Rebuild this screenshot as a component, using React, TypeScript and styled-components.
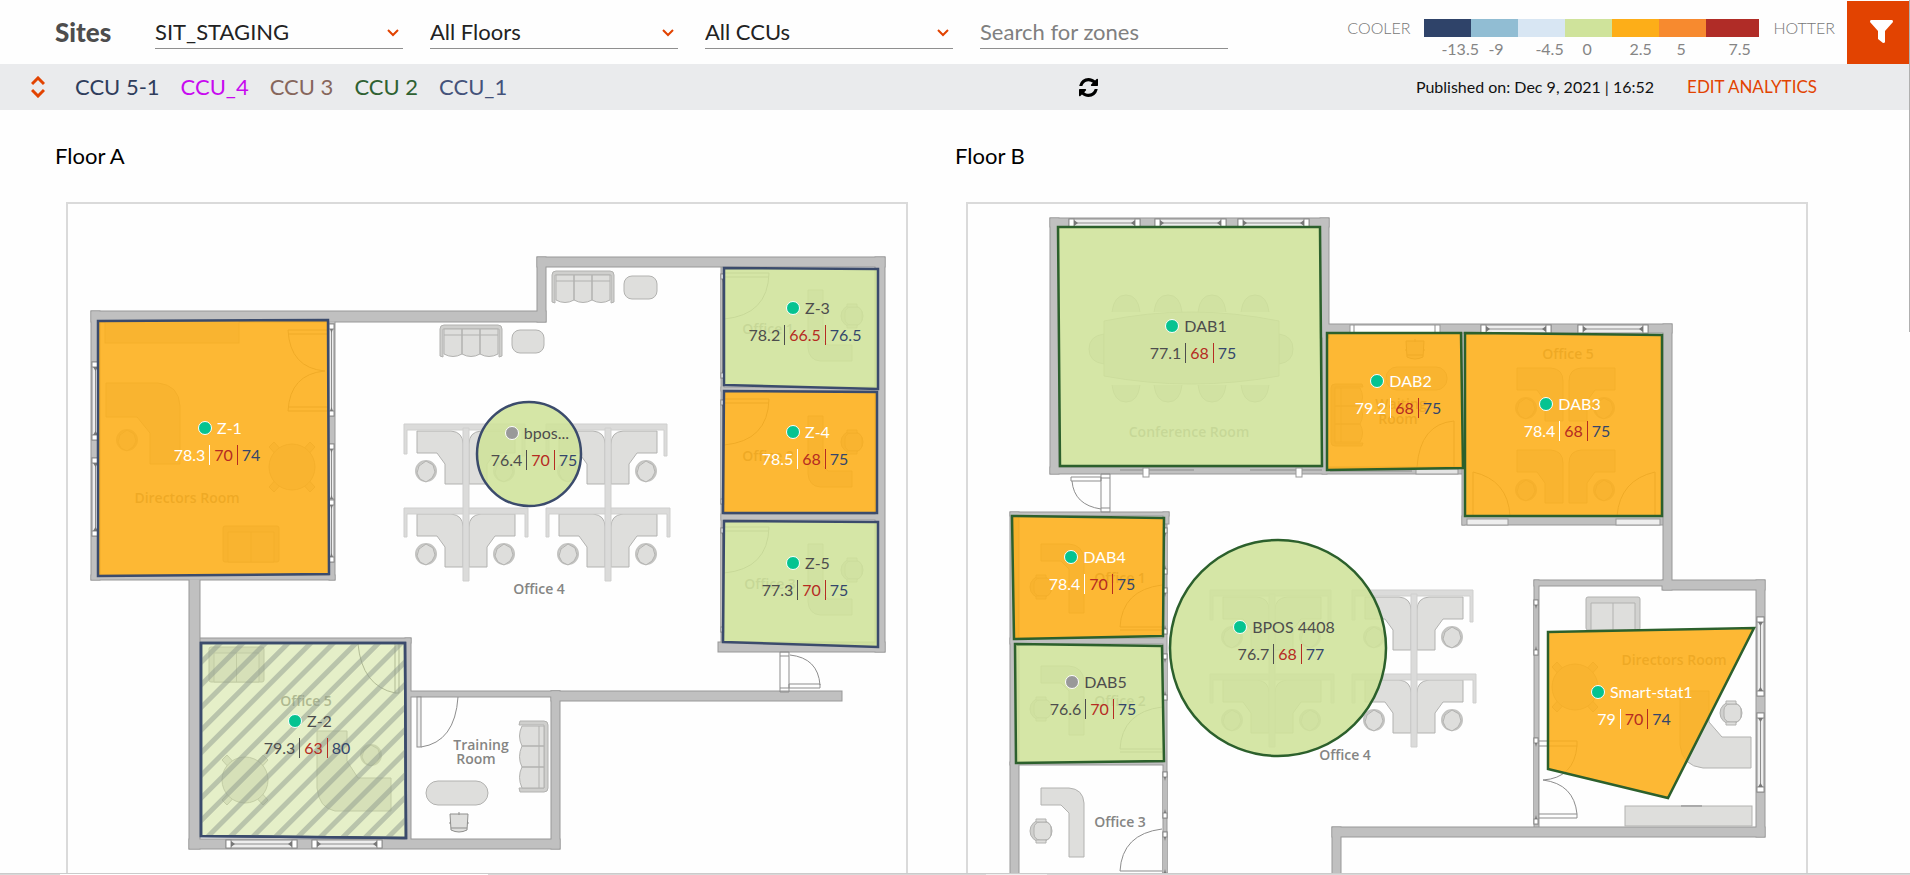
import React from 'react';
import styled, { createGlobalStyle } from 'styled-components';

const GlobalStyle = createGlobalStyle`
  * { box-sizing: border-box; }
  body {
    margin: 0;
    background: #fefefe;
    color: #000;
    font-family: Lato, "Liberation Sans", sans-serif;
    font-size: 16px;
  }
`;

const ORANGE = '#e24301';

/* ---------- page frame ---------- */

const Window = styled.div`
  display: flex;
  flex-direction: column;
  height: 100vh;
  overflow: hidden;
`;

const Upper = styled.div`
  display: flex;
  flex: 1;
  min-height: 0;
`;

const Page = styled.div`
  display: flex;
  flex-direction: column;
  flex: 1;
  min-width: 0;
`;

const ScrollRail = styled.div`
  width: 1px;
`;

const ScrollThumb = styled.div`
  height: 38%;
  background: #b0b0b0;
`;

const BottomEdge = styled.div`
  display: flex;
  height: 2px;
  border-top: 1px solid #cbcbcb;
`;

const EdgePart = styled.div<{ $grow: number; $tone: string }>`
  flex: ${(p) => p.$grow} 0 0;
  background: ${(p) => p.$tone};
`;

/* ---------- header ---------- */

const Header = styled.header`
  display: flex;
  flex-shrink: 0;
  height: 64px;
  padding-left: 55px;
`;

const Title = styled.h1`
  width: 100px;
  margin: 0;
  font-size: 26px;
  line-height: 64px;
  font-weight: 900;
  color: #4d4d4d;
`;

const Filters = styled.div`
  display: flex;
  gap: 27px;
  flex: 0 1 1073px;
  height: 49px;
  padding-top: 15px;
`;

const Field = styled.label`
  display: grid;
  align-items: center;
  flex: 1 1 0;
  min-width: 0;
  border-bottom: 1px solid #8f8f8f;
`;

const SelectBox = styled.select`
  grid-area: 1 / 1;
  width: 100%;
  appearance: none;
  border: 0;
  padding: 0;
  background: transparent;
  font: inherit;
  font-size: 22px;
  line-height: 30px;
  color: #222;
`;

const SearchBox = styled.input`
  grid-area: 1 / 1;
  width: 100%;
  border: 0;
  padding: 0;
  background: transparent;
  font: inherit;
  font-size: 22px;
  line-height: 30px;
  color: #222;
  &::placeholder { color: #808080; opacity: 1; }
`;

const Caret = styled.svg`
  grid-area: 1 / 1;
  justify-self: end;
  margin: 3px 4px 0 0;
  pointer-events: none;
`;

const Legend = styled.div`
  display: flex;
  gap: 14px;
  margin-left: auto;
  padding: 19px 12px 0 0;
`;

const LegendEnd = styled.span`
  font-size: 16px;
  line-height: 18px;
  font-weight: 300;
  color: #777;
`;

const Scale = styled.div`
  display: flex;
`;

const Step = styled.div<{ $color: string }>`
  width: 47px;
  border-top: 18px solid ${(p) => p.$color};
  padding-left: 17px;
  font-size: 16px;
  line-height: 24px;
  white-space: nowrap;
  color: #858585;
  &:last-child { width: 53px; padding-left: 22px; }
`;

const FilterButton = styled.button`
  display: flex;
  justify-content: center;
  width: 62px;
  margin-top: 1px;
  border: 0;
  padding: 19px 0 0 7px;
  background: ${ORANGE};
`;

/* ---------- controller bar ---------- */

const Bar = styled.div`
  display: grid;
  grid-template-columns: 13fr 10fr;
  flex-shrink: 0;
  height: 46px;
  background: #eaebed;
`;

const BarLeft = styled.div`
  display: flex;
  align-items: center;
  gap: 21px;
  padding-left: 31px;
`;

const BarRight = styled.div`
  display: flex;
  align-items: center;
  gap: 33px;
  padding-right: 92px;
`;

const IconButton = styled.button`
  display: flex;
  border: 0;
  padding: 0;
  background: transparent;
  color: inherit;
`;

const SortButton = styled(IconButton)`
  margin-right: 9px;
`;

const RefreshButton = styled(IconButton)`
  margin-right: auto;
`;

const Controller = styled.a<{ $color: string }>`
  font-size: 22px;
  line-height: 46px;
  text-decoration: none;
  color: ${(p) => p.$color};
`;

const Published = styled.span`
  font-size: 16px;
  line-height: 44px;
  color: #111;
`;

const EditLink = styled.a`
  font-size: 17px;
  line-height: 44px;
  text-decoration: none;
  color: ${ORANGE};
`;

/* ---------- floors ---------- */

const Floors = styled.main`
  display: grid;
  grid-template-columns: 1fr 1fr;
  gap: 36px;
  flex: 1;
  min-height: 0;
  padding: 30px 90px 0 55px;
  overflow: hidden;
`;

const FloorTitle = styled.h2`
  margin: 0 0 30px;
  font-size: 22px;
  line-height: 32px;
  font-weight: 400;
`;

const Sheet = styled.div`
  position: relative;
  margin: 0 11px;
  border: 2px solid #dadada;
`;

const Drawing = styled.svg`
  display: block;
  width: 100%;
`;

const RoomText = styled.text`
  font-family: "Open Sans", sans-serif;
  font-size: 14px;
  font-weight: 600;
  fill: #858583;
  text-anchor: middle;
`;

const Pin = styled.div<{ $light: boolean }>`
  position: absolute;
  transform: translate(-50%, -14px);
  font-size: 16px;
  white-space: nowrap;
  color: ${(p) => (p.$light ? '#fff' : '#4d4d4d')};
`;

const PinName = styled.div`
  display: flex;
  align-items: center;
  justify-content: safe center;
  gap: 5px;
  height: 27px;
  padding-left: 6px;
`;

const Dot = styled.span<{ $on: boolean }>`
  flex: none;
  width: 14px;
  height: 14px;
  border: 1px solid #fff;
  border-radius: 50%;
  background: ${(p) => (p.$on ? '#05c391' : '#999')};
`;

const Readings = styled.div`
  display: flex;
  align-items: center;
  justify-content: center;
  height: 27px;
`;

const Reading = styled.span<{ $color?: string }>`
  padding: 0 4px;
  line-height: 20px;
  color: ${(p) => p.$color ?? 'inherit'};
  &:not(:last-child) { border-right: 1px solid; }
`;

/* ---------- drawing parts ---------- */

type Rect = [number, number, number, number];

const Walls = ({ rects }: { rects: Rect[] }) => (
  <>
    <g fill="#989898" stroke="#989898" strokeWidth={1}>
      {rects.map(([x, y, w, h], i) => <rect key={i} x={x} y={y} width={w} height={h} />)}
    </g>
    <g fill="#c0c0c0">
      {rects.map(([x, y, w, h], i) => <rect key={i} x={x + 0.5} y={y + 0.5} width={w - 1} height={h - 1} />)}
    </g>
  </>
);

const PaneH = ({ x, y, w, h = 8 }: { x: number; y: number; w: number; h?: number }) => (
  <g stroke="#8d8d8d" strokeWidth={1}>
    <rect x={x} y={y} width={w} height={h} fill="#ededed" />
    <path d={`M${x} ${y + h / 2}h${w}`} />
    <rect x={x} y={y} width={5} height={h} fill="#fff" />
    <rect x={x + w - 5} y={y} width={5} height={h} fill="#fff" />
    <path d={`M${x + 5} ${y + 1}l4 ${h / 2 - 1}l-4 ${h / 2 - 1}zM${x + w - 5} ${y + 1}l-4 ${h / 2 - 1}l4 ${h / 2 - 1}z`} fill="#777" stroke="none" />
  </g>
);

const PaneV = ({ x, y, h, w = 7 }: { x: number; y: number; h: number; w?: number }) => (
  <g stroke="#8d8d8d" strokeWidth={1}>
    <rect x={x} y={y} width={w} height={h} fill="#ededed" />
    <path d={`M${x + w / 2} ${y}v${h}`} />
    <rect x={x} y={y} width={w} height={5} fill="#fff" />
    <rect x={x} y={y + h - 5} width={w} height={5} fill="#fff" />
    <path d={`M${x + 1} ${y + 5}l${w / 2 - 1} 4l${w / 2 - 1} -4zM${x + 1} ${y + h - 5}l${w / 2 - 1} -4l${w / 2 - 1} 4z`} fill="#777" stroke="none" />
  </g>
);

const FURNITURE = { fill: '#dededc', stroke: '#b2b2b0', strokeWidth: 1 };

const Sofa = ({ x, y, rotate = 0 }: { x: number; y: number; rotate?: number }) => (
  <g transform={`translate(${x} ${y}) rotate(${rotate})`} {...FURNITURE}>
    <path d="M0 31V4Q0 0 4 0H58Q62 0 62 4V31L59 32V4H3V32Z" fill="#cfcfcd" />
    <path d="M4 4H22V29Q13 34 4 29ZM22 4H40V29Q31 34 22 29ZM40 4H58V29Q49 34 40 29Z" />
    <path d="M4 10H58" />
  </g>
);

const LoveSeat = ({ x, y, w = 54, h = 33 }: { x: number; y: number; w?: number; h?: number }) => (
  <g {...FURNITURE}>
    <rect x={x} y={y} width={w} height={h} rx={2} fill="#d2d2d0" />
    <path d={`M${x + 5} ${y + 6}h${w - 10}v${h - 6}h${10 - w}zM${x + w / 2} ${y + 6}v${h - 6}`} />
  </g>
);

const RoundChair = ({ x, y }: { x: number; y: number }) => (
  <g transform={`translate(${x} ${y})`} {...FURNITURE}>
    <circle r={10} strokeWidth={2} stroke="#c4c4c2" />
    <path d="M-7 -5L0 -10L7 -6L9 1L6 7L0 11L-6 8L-9 2Z" />
  </g>
);

const BoxChair = ({ x, y }: { x: number; y: number }) => (
  <g transform={`translate(${x} ${y})`} {...FURNITURE}>
    <circle r={11} fill="#d0d0ce" />
    <rect x={-7} y={-9} width={17} height={18} rx={6} />
    <path d="M-5 -12H5V-9H-5ZM-5 9H5V12H-5Z" />
  </g>
);

const HALF_DESK = 'M-49 7H-15Q-3 8 -3 20V60H-21V40L-29 29H-49Z';

const Desks = ({ x, y }: { x: number; y: number }) => (
  <g transform={`translate(${x} ${y})`} {...FURNITURE}>
    <path d={HALF_DESK} />
    <path d={HALF_DESK} transform="scale(-1 1)" />
    <RoundChair x={-40} y={47} />
    <RoundChair x={38} y={47} />
  </g>
);

const DeskPod = ({ x, y }: { x: number; y: number }) => (
  <g>
    <Desks x={x} y={y} />
    <Desks x={x} y={y + 83} />
    <g transform={`translate(${x} ${y})`} fill="#dbdbda" stroke="#cfcfce" strokeWidth={1}>
      <path d="M-62 0H59V32H56V6H-59V30H-62Z" />
      <path d="M-62 84H62V113H59V90H-59V113H-62Z" />
      <path d="M-3 4H3V157H-3Z" />
    </g>
  </g>
);

const CornerDesk = ({ x, y }: { x: number; y: number }) => (
  <path transform={`translate(${x} ${y})`} d="M0 0H52Q73 2 74 23V81H44V50L31 34H0Z" {...FURNITURE} />
);

const SmallDesk = ({ x, y }: { x: number; y: number }) => (
  <path transform={`translate(${x} ${y})`} d="M0 0H28Q42 1 43 15V69H28V25L20 17H0Z" {...FURNITURE} />
);

const RoundTable = ({ x, y }: { x: number; y: number }) => (
  <g transform={`translate(${x} ${y})`} {...FURNITURE}>
    <path d="M-23 -20L-18 -25L23 20L18 25ZM23 -20L18 -25L-23 20L-18 25Z" />
    <circle r={23} />
  </g>
);

const Stool = ({ x, y }: { x: number; y: number }) => (
  <g transform={`translate(${x} ${y})`} {...FURNITURE} stroke="#8f8f8d">
    <path d="M-9 -9H9L8 7Q0 11 -8 7ZM-8 5H8M0 -11V-8M-10 0H-8M8 0H10" />
  </g>
);

const LINE = { fill: 'none', stroke: '#8d8d8d', strokeWidth: 1 };

const Stripes = () => (
  <pattern id="hatch" width={16} height={16} patternUnits="userSpaceOnUse" patternTransform="rotate(45)">
    <rect width={5} height={16} fill="#8d9a8d" fillOpacity={0.5} />
  </pattern>
);

const FloorADrawing = () => (
  <>
    <Walls
      rects={[
        [91, 311, 455, 11], [537, 257, 9, 65], [537, 257, 348, 10], [875, 257, 10, 395],
        [718, 642, 167, 10], [91, 311, 9, 269], [91, 575, 244, 5], [329, 321, 6, 259],
        [189, 579, 11, 270], [189, 839, 371, 10], [200, 638, 211, 5], [405, 638, 6, 206],
        [405, 691, 155, 6], [551, 691, 9, 158], [551, 691, 291, 10], [721, 267, 3, 376],
        [721, 387, 156, 4], [721, 514, 156, 6],
      ]}
    />
    <PaneV x={92} y={362} h={78} />
    <PaneV x={92} y={458} h={78} />
    <PaneV x={329} y={324} h={92} w={5} />
    <PaneV x={329} y={444} h={60} w={5} />
    <PaneV x={329} y={500} h={62} w={5} />
    <PaneH x={226} y={840} w={71} />
    <PaneH x={312} y={840} w={70} />
    {[274, 400, 528].map((y) => <PaneV key={y} x={721} y={y} h={104} w={3} />)}

    <Sofa x={552} y={271} />
    <rect x={624} y={276} width={33} height={23} rx={8} {...FURNITURE} />
    <Sofa x={440} y={325} />
    <rect x={512} y={330} width={32} height={23} rx={8} {...FURNITURE} />
    <DeskPod x={466} y={424} />
    <DeskPod x={608} y={424} />
    <RoomText x={539} y={594}>Office 4</RoomText>

    <rect x={105} y={321} width={134} height={22} {...FURNITURE} />
    <CornerDesk x={106} y={383} />
    <RoundChair x={127} y={440} />
    <path d="M329 330H288Q290 368 325 371Q290 374 288 411H329M288 334H329M288 407H329" {...LINE} />
    <RoundTable x={292} y={467} />
    <RoomText x={187} y={503}>Directors Room</RoomText>
    <LoveSeat x={223} y={526} w={56} h={36} />

    {[273, 399, 527].map((y) => (
      <g key={y}>
        <path d={`M724 ${y}H769Q768 ${y + 42} 724 ${y + 46}M724 ${y + 4}H769`} {...LINE} />
        <path transform={`translate(808 ${y + 17})`} d="M0 0H15V50L20 55H44V71H12Q1 70 0 58Z" {...FURNITURE} />
        <BoxChair x={852} y={y + 43} />
      </g>
    ))}
    <RoomText x={768} y={334}>Office 1</RoomText>
    <RoomText x={768} y={461}>Office 2</RoomText>
    <RoomText x={770} y={589}>Office 3</RoomText>

    <LoveSeat x={209} y={647} w={55} h={35} />
    <path d="M358 644Q362 686 395 693H399V644M395 644V693" {...LINE} />
    <RoomText x={306} y={706}>Office 5</RoomText>
    <RoundTable x={245} y={780} />
    <path d="M317 731H347V761L358 778H391V811H335Q319 808 317 788Z" {...FURNITURE} />
    <RoundChair x={371} y={755} />

    <rect x={417} y={697} width={4} height={50} {...LINE} fill="#eee" />
    <path d="M458 697Q455 742 421 747" {...LINE} />
    <RoomText x={481} y={750}>Training</RoomText>
    <RoomText x={476} y={764}>Room</RoomText>
    <rect x={426} y={781} width={62} height={24} rx={12} {...FURNITURE} />
    <Stool x={459} y={823} />
    <g transform="translate(548 721) rotate(90)" {...FURNITURE}>
      <path d="M0 28V4Q0 0 4 0H67Q71 0 71 4V28L67 29V4H4V29Z" fill="#cfcfcd" />
      <path d="M5 4H25V26Q15 31 5 26ZM25 4H46V26Q36 31 25 26ZM46 4H67V26Q56 31 46 26ZM5 9H67" />
    </g>

    <path d="M780 652H789V692H780ZM780 656H789M780 688H789M789 684H820V688H789ZM790 655Q818 658 820 685" {...LINE} />
  </>
);

const FloorBDrawing = () => (
  <>
    <Walls
      rects={[
        [1050, 218, 9, 256], [1050, 218, 279, 9], [1320, 218, 9, 120], [1322, 330, 5, 144],
        [1320, 324, 352, 9], [1050, 467, 412, 7], [1663, 324, 9, 266], [1462, 333, 3, 192],
        [1462, 516, 201, 9], [1662, 580, 103, 10], [1534, 580, 130, 6], [1756, 580, 9, 257],
        [1332, 827, 433, 10], [1332, 827, 9, 120], [1534, 580, 5, 247], [1010, 512, 9, 450],
        [1010, 512, 159, 4], [1163, 512, 6, 12], [1163, 524, 4, 438], [1010, 638, 156, 6],
        [1010, 762, 156, 3],
      ]}
    />
    <PaneH x={1069} y={219} w={71} />
    <PaneH x={1155} y={219} w={71} />
    <PaneH x={1238} y={219} w={71} />
    <rect x={1350} y={325} width={90} height={8} fill="#fff" stroke="#999" />
    <path d="M1354 325V333M1435 325V333" {...LINE} />
    <PaneH x={1481} y={325} w={70} />
    <PaneH x={1578} y={325} w={70} />
    <path d="M1120 470H1194M1250 470H1322M1330 471H1412" {...LINE} />
    <rect x={1143} y={468} width={6} height={9} fill="#fff" stroke="#999" />
    <rect x={1296} y={468} width={6} height={9} fill="#fff" stroke="#999" />
    <rect x={1416} y={469} width={42} height={5} fill="#e4e4e4" stroke="#999" />
    <rect x={1467} y={519} width={41} height={6} fill="#eee" stroke="#999" />
    <rect x={1616} y={519} width={44} height={6} fill="#eee" stroke="#999" />
    <PaneV x={1757} y={617} h={79} />
    <PaneV x={1757} y={713} h={79} />
    <PaneV x={1534} y={600} h={55} w={4} />
    <PaneV x={1534} y={738} h={86} w={4} />
    {[528, 654, 772].map((y) => <PaneV key={y} x={1163} y={y} h={46} w={4} />)}
    <PaneV x={1163} y={588} h={46} w={4} />
    <PaneV x={1163} y={832} h={46} w={4} />

    {[1126, 1168, 1212, 1255].map((x) => (
      <g key={x} {...FURNITURE}>
        <path d={`M${x - 14} 312Q${x - 12} 295 ${x} 295Q${x + 12} 295 ${x + 14} 312`} />
        <path d={`M${x - 14} 385Q${x - 12} 402 ${x} 402Q${x + 12} 402 ${x + 14} 385`} />
      </g>
    ))}
    <path d="M1104 334Q1089 336 1089 349Q1089 362 1104 364ZM1279 334Q1293 336 1293 349Q1293 362 1279 364Z" {...FURNITURE} />
    <path d="M1104 321Q1191 303 1279 321V376Q1191 392 1104 376Z" {...FURNITURE} />
    <RoomText x={1189} y={437}>Conference Room</RoomText>

    <Stool x={1415} y={350} />
    <rect x={1386} y={367} width={61} height={23} rx={11} {...FURNITURE} />
    <RoomText x={1401} y={409}>Waiting</RoomText>
    <RoomText x={1398} y={424}>Room</RoomText>
    <Sofa x={1331} y={446} rotate={-90} />
    <path d="M1417 467Q1420 424 1454 421V467" {...LINE} />

    <RoomText x={1568} y={359}>Office 5</RoomText>
    <Desks x={1566} y={361} />
    <Desks x={1566} y={443} />
    <path d="M1473 516V472Q1508 480 1510 516M1655 516V472Q1620 480 1617 516" {...LINE} />

    <path d="M1101 474H1110V512H1101ZM1101 478H1110M1101 508H1110M1071 477H1101V481H1071ZM1072 481Q1074 505 1101 509" {...LINE} />

    {[544, 666, 788].map((y) => (
      <g key={y}>
        <SmallDesk x={1041} y={y} />
        <BoxChair x={1041} y={y + 43} />
        <path d={`M1162 ${y + 41}Q1122 ${y + 46} 1120 ${y + 83}H1162M1120 ${y + 86}H1162`} {...LINE} />
      </g>
    ))}
    <RoomText x={1120} y={583}>Office 1</RoomText>
    <RoomText x={1120} y={706}>Office 2</RoomText>
    <RoomText x={1120} y={827}>Office 3</RoomText>

    <DeskPod x={1272} y={590} />
    <DeskPod x={1414} y={590} />
    <RoomText x={1345} y={760}>Office 4</RoomText>

    <LoveSeat x={1586} y={597} />
    <RoundTable x={1575} y={687} />
    <RoomText x={1674} y={665}>Directors Room</RoomText>
    <path d="M1680 691H1709V722L1722 737H1751V768H1703Q1682 766 1680 745Z" {...FURNITURE} />
    <BoxChair x={1731} y={713} />
    <rect x={1625} y={806} width={127} height={20} {...FURNITURE} />
    <rect x={1681} y={805} width={21} height={2} fill="#aaa" />
    <path d="M1539 741H1577V746H1539M1577 746Q1574 778 1543 780Q1574 784 1577 814M1539 814H1577V818H1539" {...LINE} />
  </>
);

/* ---------- data ---------- */

const FILL = { warm: '#fdae18', mild: '#cfe29a' };

type Zone = {
  name: string;
  values: [string, string, string];
  x: number;
  y: number;
  width?: number;
  tone: 'warm' | 'mild';
  off?: boolean;
  hatched?: boolean;
  points?: string;
  circle?: [number, number, number];
};

type Floor = {
  title: string;
  left: number;
  outline: string;
  drawing: React.ReactNode;
  zones: Zone[];
};

const SHEET_W = 838;
const SHEET_H = 740;
const SHEET_TOP = 204;

const floors: Floor[] = [
  {
    title: 'Floor A',
    left: 68,
    outline: '#3b4b6c',
    drawing: <FloorADrawing />,
    zones: [
      { name: 'Z-1', values: ['78.3', '70', '74'], x: 217, y: 428, tone: 'warm', points: '98,321 328,320 329,574 98,576' },
      { name: 'Z-3', values: ['78.2', '66.5', '76.5'], x: 805, y: 308, tone: 'mild', points: '724,268 878,269 878,389 724,385' },
      { name: 'Z-4', values: ['78.5', '68', '75'], x: 805, y: 432, tone: 'warm', points: '724,391 877,392 877,513 723,513' },
      { name: 'Z-5', values: ['77.3', '70', '75'], x: 805, y: 563, tone: 'mild', points: '724,521 878,522 878,647 723,642' },
      { name: 'bpos...', values: ['76.4', '70', '75'], x: 534, y: 433, tone: 'mild', off: true, circle: [529, 454, 52] },
      { name: 'Z-2', values: ['79.3', '63', '80'], x: 307, y: 721, tone: 'mild', hatched: true, points: '201,643 405,643 406,838 201,836' },
    ],
  },
  {
    title: 'Floor B',
    left: 968,
    outline: '#2c602c',
    drawing: <FloorBDrawing />,
    zones: [
      { name: 'DAB1', values: ['77.1', '68', '75'], x: 1193, y: 326, tone: 'mild', points: '1058,227 1320,227 1322,466 1060,466' },
      { name: 'DAB2', values: ['79.2', '68', '75'], x: 1398, y: 381, tone: 'warm', points: '1327,333 1461,333 1463,468 1327,470' },
      { name: 'DAB3', values: ['78.4', '68', '75'], x: 1567, y: 404, tone: 'warm', points: '1465,333 1662,335 1662,516 1465,516' },
      { name: 'DAB4', values: ['78.4', '70', '75'], x: 1092, y: 557, tone: 'warm', points: '1012,516 1164,518 1163,636 1014,639' },
      { name: 'DAB5', values: ['76.6', '70', '75'], x: 1093, y: 682, tone: 'mild', off: true, points: '1015,644 1162,646 1164,761 1016,763' },
      { name: 'BPOS 4408', values: ['76.7', '68', '77'], x: 1281, y: 627, tone: 'mild', circle: [1278, 648, 108] },
      { name: 'Smart-stat1', values: ['79', '70', '74'], x: 1634, y: 692, width: 98, tone: 'warm', points: '1548,632 1754,628 1668,798 1548,769' },
    ],
  },
];

const ZoneShape = ({ zone, stroke, fill, fillOpacity }: { zone: Zone; stroke: string; fill: string; fillOpacity: number }) =>
  zone.circle ? (
    <circle cx={zone.circle[0]} cy={zone.circle[1]} r={zone.circle[2]} fill={fill} fillOpacity={fillOpacity} stroke={stroke} strokeWidth={2.5} />
  ) : (
    <polygon points={zone.points} fill={fill} fillOpacity={fillOpacity} stroke={stroke} strokeWidth={2.5} />
  );

const FloorSheet = ({ floor }: { floor: Floor }) => (
  <section>
    <FloorTitle>{floor.title}</FloorTitle>
    <Sheet>
      <Drawing viewBox={`${floor.left} ${SHEET_TOP} ${SHEET_W} ${SHEET_H}`}>
        <defs><Stripes /></defs>
        {floor.drawing}
        {floor.zones.map((z) => (
          <g key={z.name}>
            <ZoneShape zone={z} stroke={floor.outline} fill={FILL[z.tone]} fillOpacity={z.hatched ? 0.55 : 0.88} />
            {z.hatched && <ZoneShape zone={z} stroke={floor.outline} fill="url(#hatch)" fillOpacity={1} />}
          </g>
        ))}
      </Drawing>
      {floor.zones.map((z) => (
        <Pin
          key={z.name}
          $light={z.tone === 'warm'}
          style={{
            left: `${((z.x - floor.left) / SHEET_W) * 100}%`,
            top: `${((z.y - SHEET_TOP) / SHEET_H) * 100}%`,
            width: z.width ?? 112,
          }}
        >
          <PinName><Dot $on={!z.off} />{z.name}</PinName>
          <Readings>
            <Reading>{z.values[0]}</Reading>
            <Reading $color="#b52b22">{z.values[1]}</Reading>
            <Reading $color="#34466b">{z.values[2]}</Reading>
          </Readings>
        </Pin>
      ))}
    </Sheet>
  </section>
);

const selects = [
  { label: 'Site', value: 'SIT_STAGING' },
  { label: 'Floor', value: 'All Floors' },
  { label: 'CCU', value: 'All CCUs' },
];

const steps = [
  { color: '#2f4369', value: '-13.5' },
  { color: '#91bdd3', value: '-9' },
  { color: '#d8e6f3', value: '-4.5' },
  { color: '#cfe39b', value: '0' },
  { color: '#fdae18', value: '2.5' },
  { color: '#f78a2f', value: '5' },
  { color: '#b02c27', value: '7.5' },
];

const controllers = [
  { name: 'CCU 5-1', color: '#2f3d5c' },
  { name: 'CCU_4', color: '#c80af0' },
  { name: 'CCU 3', color: '#86665c' },
  { name: 'CCU 2', color: '#2f6132' },
  { name: 'CCU_1', color: '#44527a' },
];

export default function App() {
  return (
    <Window>
      <GlobalStyle />
      <Upper>
        <Page>
          <Header>
            <Title>Sites</Title>
            <Filters>
              {selects.map((s) => (
                <Field key={s.label}>
                  <SelectBox aria-label={s.label} defaultValue={s.value}>
                    <option>{s.value}</option>
                  </SelectBox>
                  <Caret width={12} height={10} viewBox="0 0 12 10" fill="none" stroke={ORANGE} strokeWidth={2}>
                    <path d="M1 2L6 7L11 2" />
                  </Caret>
                </Field>
              ))}
              <Field>
                <SearchBox type="text" aria-label="Search for zones" placeholder="Search for zones" />
              </Field>
            </Filters>
            <Legend>
              <LegendEnd>COOLER</LegendEnd>
              <Scale>
                {steps.map((s) => <Step key={s.value} $color={s.color}>{s.value}</Step>)}
              </Scale>
              <LegendEnd>HOTTER</LegendEnd>
            </Legend>
            <FilterButton aria-label="Filter">
              <svg width={23} height={23} viewBox="0 0 23 23" fill="#fff">
                <path d="M1 0H22Q23 0 23 2L15 11V22Q15 23 13 23L8 19V11L0 2Q0 0 1 0Z" />
              </svg>
            </FilterButton>
          </Header>
          <Bar>
            <BarLeft>
              <SortButton aria-label="Sort controllers">
                <svg width={14} height={22} viewBox="0 0 14 22" fill="none" stroke={ORANGE} strokeWidth={3}>
                  <path d="M1 8L7 2L13 8M1 14L7 20L13 14" />
                </svg>
              </SortButton>
              {controllers.map((c) => <Controller key={c.name} href="#" $color={c.color}>{c.name}</Controller>)}
            </BarLeft>
            <BarRight>
              <RefreshButton aria-label="Refresh">
                <svg width={19} height={19} viewBox="0 0 1536 1536" fill="#000">
                  <path d="M1511 928q0 5-1 7-64 268-268 434.500t-478 166.500q-146 0-282.500-55t-243.500-157l-129 129q-19 19-45 19t-45-19-19-45v-448q0-26 19-45t45-19h448q26 0 45 19t19 45-19 45l-137 137q71 66 161 102t187 36q134 0 250-65t186-179q11-17 53-117 8-23 30-23h192q13 0 22.500 9.500t9.500 22.500zm25-800v448q0 26-19 45t-45 19h-448q-26 0-45-19t-19-45 19-45l138-138q-148-137-349-137-134 0-250 65t-186 179q-11 17-53 117-8 23-30 23h-199q-13 0-22.500-9.500t-9.500-22.500v-7q65-268 270-434.500t480-166.500q146 0 284 55.500t245 156.500l130-129q19-19 45-19t45 19 19 45z" />
                </svg>
              </RefreshButton>
              <Published>Published on: Dec 9, 2021 | 16:52</Published>
              <EditLink href="#">EDIT ANALYTICS</EditLink>
            </BarRight>
          </Bar>
          <Floors>
            {floors.map((f) => <FloorSheet key={f.title} floor={f} />)}
          </Floors>
        </Page>
        <ScrollRail><ScrollThumb /></ScrollRail>
      </Upper>
      <BottomEdge>
        <EdgePart $grow={60} $tone="#d8d8d8" />
        <EdgePart $grow={428} $tone="#fff" />
        <EdgePart $grow={498} $tone="#d8d8d8" />
        <EdgePart $grow={61} $tone="#eee" />
        <EdgePart $grow={863} $tone="#d8d8d8" />
      </BottomEdge>
    </Window>
  );
}
